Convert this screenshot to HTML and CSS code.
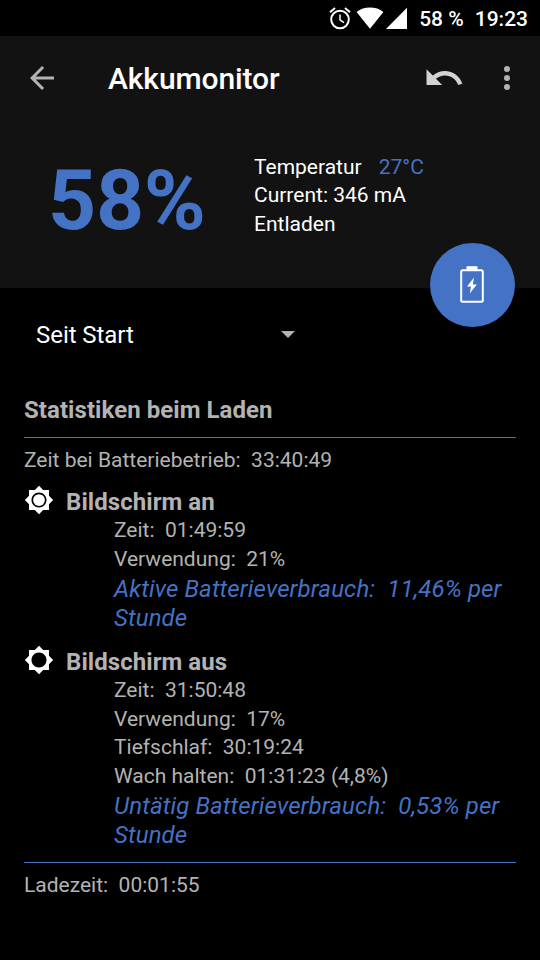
FILE: index.html
```
<!DOCTYPE html>
<html lang="de">
<head>
    <meta charset="UTF-8">
    <meta name="viewport" content="width=device-width, initial-scale=1.0">
    <title>Akkumonitor</title>
    <link rel="stylesheet" href="styles.css">
</head>
<body>
    <div class="status-bar">
        <svg class="alarm-icon" width="22" height="24" viewBox="0 0 22 24" fill="none" stroke="#fff">
            <circle cx="11" cy="13.5" r="8.8" stroke-width="2"/>
            <path d="M11 8.5v5.3l4 2.8" stroke-width="1.5"/>
            <path d="M1 6.3l5-4.2M21 6.3l-5-4.2" stroke-width="2"/>
        </svg>
        <svg class="wifi-icon" width="28" height="22" viewBox="0 0 28 22" fill="#fff">
            <path d="M14 21.8L.6 4.9C4.3 2 9 .5 14 .5s9.7 1.5 13.4 4.4z"/>
        </svg>
        <svg class="signal-icon" width="21" height="22" viewBox="0 0 21 22" fill="#fff">
            <path d="M0 22L21 .8V22z"/>
        </svg>
        <span class="status-battery">58 %</span>
        <span class="status-time">19:23</span>
    </div>

    <header class="header">
        <div class="toolbar">
            <svg class="back-icon" width="36" height="36" viewBox="0 0 24 24" fill="#b3b3b3">
                <path d="M20 11H7.83l5.59-5.59L12 4l-8 8 8 8 1.41-1.41L7.83 13H20v-2z"/>
            </svg>
            <h1>Akkumonitor</h1>
            <svg class="undo-icon" width="42" height="42" viewBox="0 0 24 24" fill="#d2d2d2">
                <path d="M12.5 8c-2.65 0-5.05.99-6.9 2.6L2 7v9h9l-3.62-3.62c1.39-1.16 3.16-1.88 5.12-1.88 3.54 0 6.55 2.31 7.6 5.5l2.37-.78C21.08 11.03 17.15 8 12.5 8z"/>
            </svg>
            <svg class="menu-icon" width="36" height="36" viewBox="0 0 24 24" fill="#b3b3b3">
                <circle cx="12" cy="6" r="2"/>
                <circle cx="12" cy="12" r="2"/>
                <circle cx="12" cy="18" r="2"/>
            </svg>
        </div>

        <div class="summary">
            <div class="level">58%</div>
            <div class="info">
                <div class="row">Temperatur<span class="temp">27°C</span></div>
                <div class="row">Current: 346 mA</div>
                <div class="row">Entladen</div>
            </div>
        </div>

        <div class="fab">
            <svg width="24" height="37" viewBox="0 0 24 37">
                <path d="M6.5.2h11v4h-11z" fill="#fff"/>
                <rect x="1.2" y="4.2" width="21.6" height="31.6" rx="1.5" fill="none" stroke="#fff" stroke-width="2"/>
                <path d="M14 11.5L7 20.5h4L9.8 27.5l7-9h-4z" fill="#fff"/>
            </svg>
        </div>
    </header>

    <div class="spinner">
        <span>Seit Start</span>
        <span class="caret"></span>
    </div>

    <main class="stats">
        <h2>Statistiken beim Laden</h2>
        <div class="row battery-time">Zeit bei Batteriebetrieb:  33:40:49</div>

        <section class="group">
            <div class="group-title">
                <svg width="30" height="30" viewBox="0 0 24 24" fill="#fff">
                    <path d="M20 15.31L23.31 12 20 8.69V4h-4.69L12 .69 8.69 4H4v4.69L.69 12 4 15.31V20h4.69L12 23.31 15.31 20H20v-4.69zM12 18c-3.31 0-6-2.69-6-6s2.69-6 6-6 6 2.69 6 6-2.69 6-6 6z"/>
                    <circle cx="12" cy="12" r="4.7"/>
                </svg>
                <h3>Bildschirm an</h3>
            </div>
            <div class="details">
                <div class="row">Zeit:  01:49:59</div>
                <div class="row">Verwendung:  21%</div>
                <div class="usage">Aktive Batterieverbrauch:  11,46% per Stunde</div>
            </div>
        </section>

        <section class="group">
            <div class="group-title">
                <svg width="30" height="30" viewBox="0 0 24 24" fill="#fff">
                    <path d="M20 15.31L23.31 12 20 8.69V4h-4.69L12 .69 8.69 4H4v4.69L.69 12 4 15.31V20h4.69L12 23.31 15.31 20H20v-4.69zM12 18c-3.31 0-6-2.69-6-6s2.69-6 6-6 6 2.69 6 6-2.69 6-6 6z"/>
                </svg>
                <h3>Bildschirm aus</h3>
            </div>
            <div class="details">
                <div class="row">Zeit:  31:50:48</div>
                <div class="row">Verwendung:  17%</div>
                <div class="row">Tiefschlaf:  30:19:24</div>
                <div class="row">Wach halten:  01:31:23 (4,8%)</div>
                <div class="usage">Untätig Batterieverbrauch:  0,53% per Stunde</div>
            </div>
        </section>

        <div class="row charge-time">Ladezeit:  00:01:55</div>
    </main>
</body>
</html>
```

FILE: styles.css
```
* {
    box-sizing: border-box;
}

body {
    margin: 0;
    background-color: #000;
    color: #b3b3b3;
    font-family: Roboto, sans-serif;
    font-size: 21px;
    min-height: 100vh;
}

h1, h2, h3 {
    margin: 0;
}

svg {
    display: block;
    flex: none;
}

.status-bar {
    display: flex;
    align-items: center;
    justify-content: flex-end;
    height: 36px;
    padding-right: 12px;
    color: #fff;
    font-weight: 500;
}

.wifi-icon {
    margin-left: 5px;
}

.signal-icon {
    margin-left: 2px;
}

.status-battery {
    margin-left: 12px;
    padding-top: 1px;
}

.status-time {
    margin-left: 11px;
    padding-top: 1px;
}

.header {
    position: relative;
    height: 252px;
    background-color: #121212;
}

.toolbar {
    display: flex;
    align-items: center;
    height: 84px;
    padding: 0 15px 0 24px;
}

.toolbar h1 {
    flex: 1;
    padding: 1px 0 0 48px;
    color: #fff;
    font-size: 30px;
    font-weight: 500;
    letter-spacing: -0.1px;
}

.menu-icon {
    margin-left: 24px;
}

.summary {
    display: flex;
    color: #fff;
}

.level {
    width: 254px;
    padding: 30px 0 0 48px;
    color: #4472c4;
    font-size: 84px;
    font-weight: bold;
    letter-spacing: -0.3px;
    line-height: 102px;
}

.info {
    padding-top: 33px;
}

.info .row {
    line-height: 28.4px;
}

.row {
    line-height: 28.6px;
    white-space: pre-wrap;
}

.temp {
    margin-left: 17px;
    color: #4472c4;
}

.fab {
    position: absolute;
    right: 25.5px;
    bottom: -39px;
    display: flex;
    align-items: center;
    justify-content: center;
    width: 84.5px;
    height: 84.5px;
    border-radius: 50%;
    background-color: #4472c4;
}

.spinner {
    display: flex;
    align-items: center;
    justify-content: space-between;
    width: 295px;
    height: 94px;
    padding-left: 36px;
    color: #fff;
    font-size: 24px;
    letter-spacing: -0.05px;
}

.caret {
    margin-bottom: 1px;
    border: 7px solid transparent;
    border-top-color: #b3b3b3;
    border-bottom: 0;
}

.stats {
    padding: 12px 24px 0;
}

.stats h2 {
    padding: 0 0 11px;
    border-bottom: 1px solid #4472c4;
    font-size: 24px;
    letter-spacing: 0.06px;
    line-height: 32px;
}

.battery-time {
    margin: 8px 0 10px;
}

.group {
    margin-bottom: 12px;
}

.group-title {
    display: flex;
    gap: 12px;
    height: 31px;
}

.group-title h3 {
    font-size: 24px;
    letter-spacing: 0.06px;
    line-height: 34px;
}

.details {
    padding: 0.4px 0 0 90px;
}

.usage {
    padding-top: 1.6px;
    color: #4472c4;
    font-size: 24px;
    font-style: italic;
    letter-spacing: 0.12px;
    line-height: 29px;
    white-space: pre-wrap;
}

.charge-time {
    padding-top: 8px;
    border-top: 1px solid #4472c4;
}
```
